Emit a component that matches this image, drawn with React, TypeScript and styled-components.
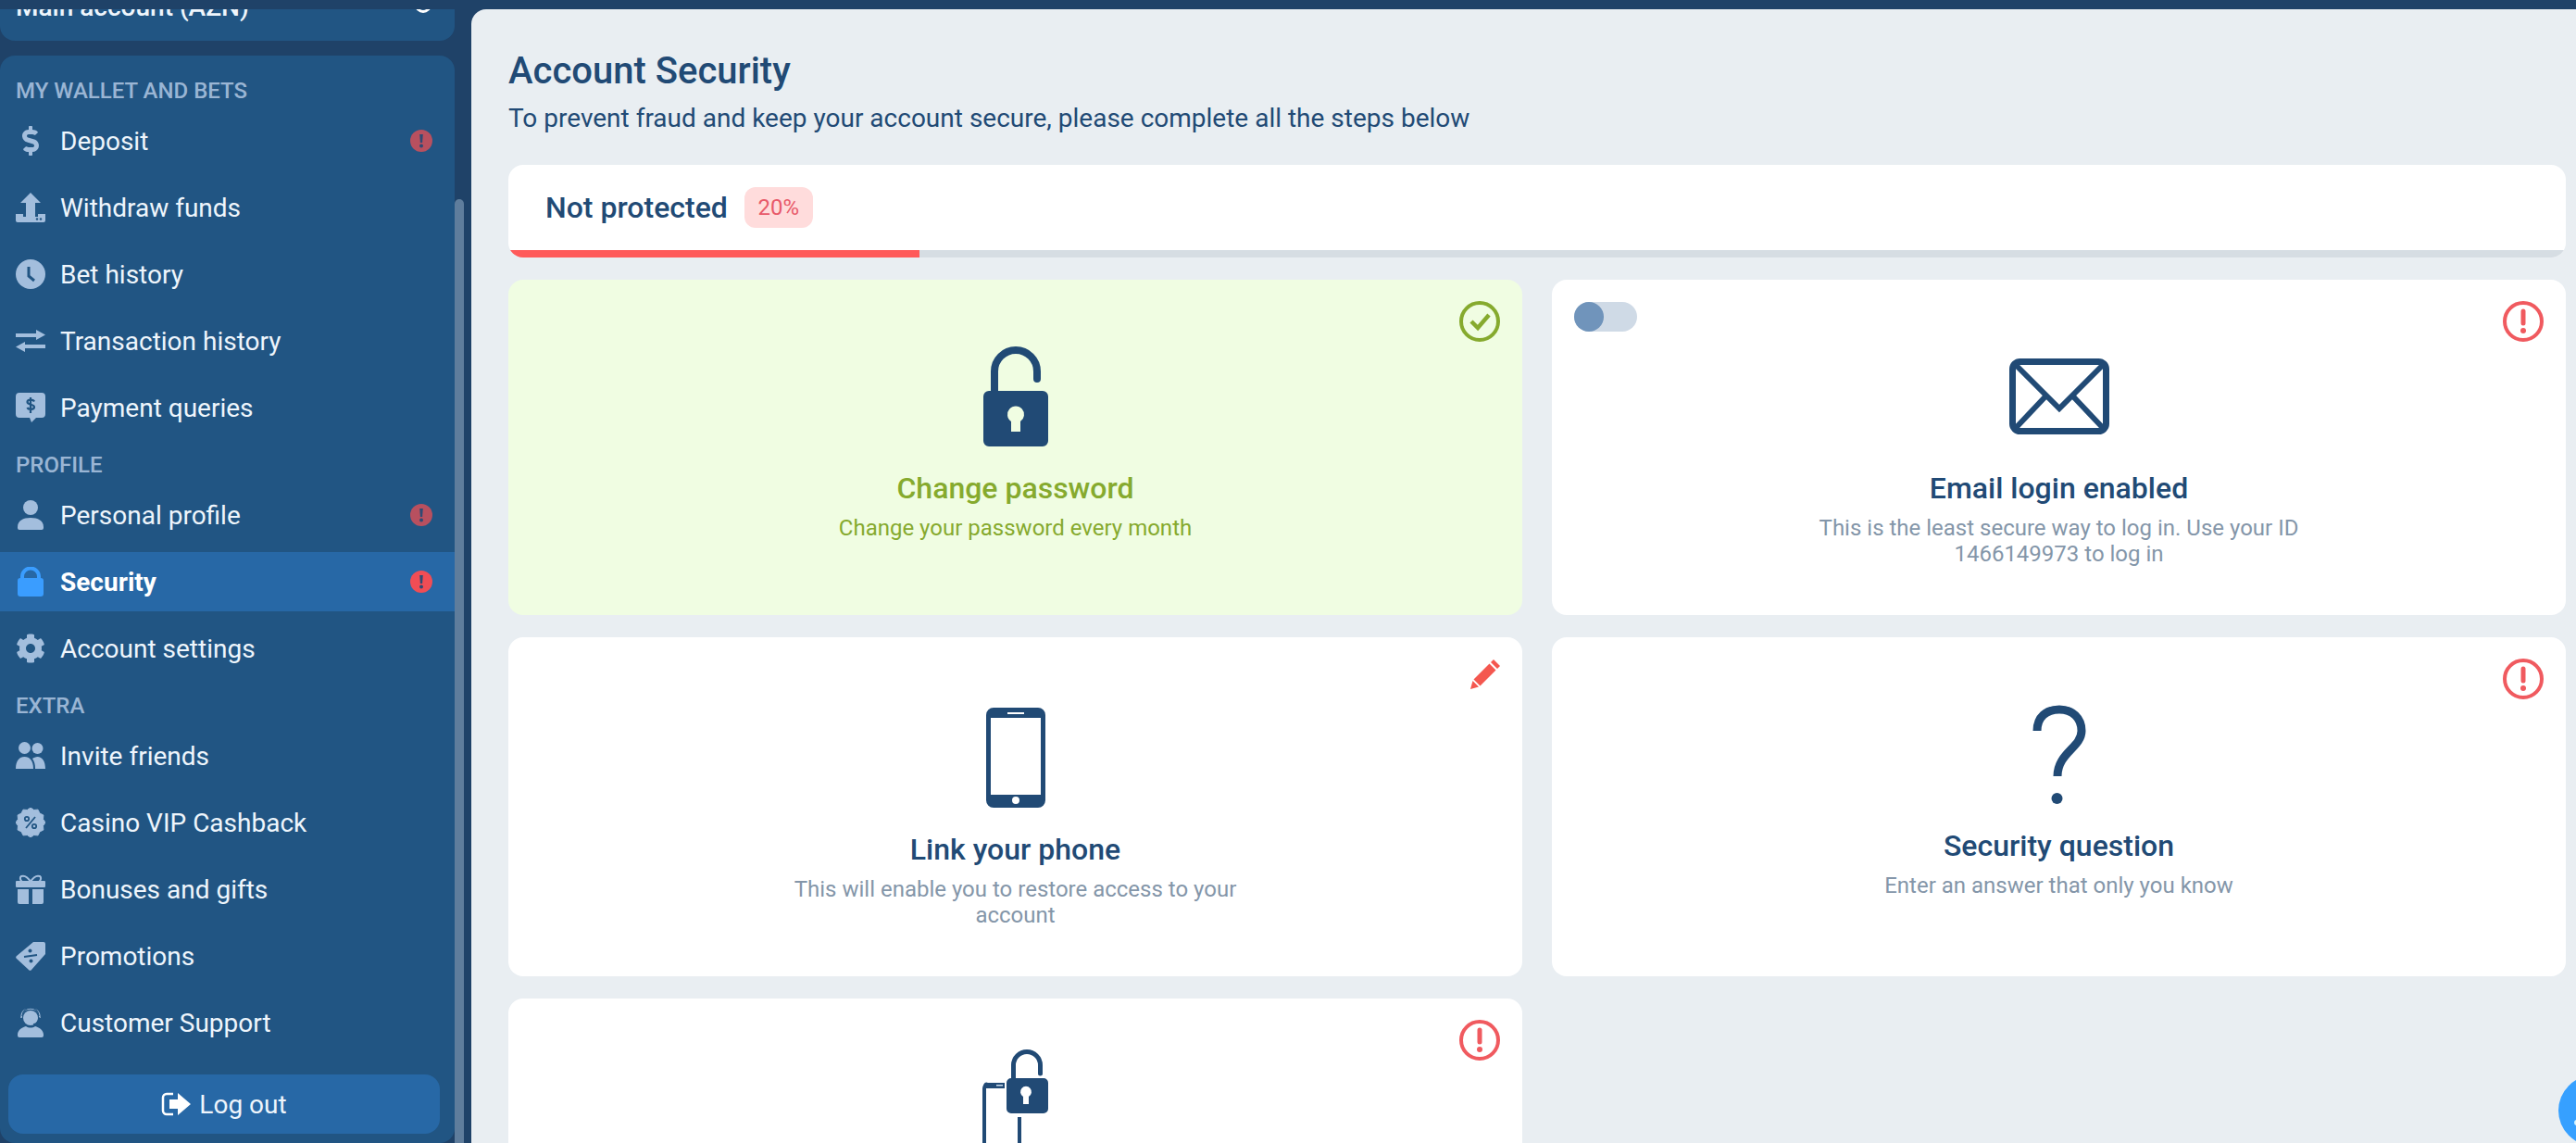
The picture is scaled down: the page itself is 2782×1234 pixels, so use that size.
import * as React from "react";
import styled, { createGlobalStyle } from "styled-components";
import { FaCog, FaDollarSign } from "react-icons/fa";

const colors = {
  topBar: "#1f4268",
  panel: "#215583",
  active: "#2768a6",
  sideIcon: "#a3bedd",
  sideText: "#eef5fc",
  sideLabel: "#9ab5d4",
  page: "#e9eef2",
  navy: "#214a75",
  muted: "#8496a9",
  green: "#86aa2e",
  red: "#f05a5f",
};

const GlobalStyle = createGlobalStyle`
  html, body {
    margin: 0;
    height: 100%;
    overflow: hidden;
    background: ${colors.topBar};
    font-family: Roboto, "Noto Sans", sans-serif;
  }
`;

const Shell = styled.div`
  width: 2782px;
  height: 1234px;
  padding-top: 10px;
  box-sizing: border-box;
  display: flex;
  overflow: hidden;
  background: ${colors.topBar};
  position: relative;
`;

const Sidebar = styled.aside`
  width: 509px;
  flex: none;
  display: flex;
  overflow: hidden;
`;

const SideScroll = styled.div`
  width: 491px;
  flex: none;
  display: flex;
  flex-direction: column;
  gap: 16px;
`;

const Rail = styled.div`
  width: 10px;
  flex: none;
  padding-top: 205px;
  display: flex;
`;

const RailThumb = styled.div`
  flex: 1;
  background: #5f7d9c;
  border-radius: 5px 5px 0 0;
`;

const AccountPanel = styled.div`
  margin-top: -26px;
  height: 60px;
  box-sizing: border-box;
  padding: 0 25px 14px 17px;
  display: flex;
  align-items: center;
  justify-content: space-between;
  background: ${colors.panel};
  border-radius: 16px;
  color: ${colors.sideText};
  font-size: 28px;
  font-weight: 500;
`;

const AccountCaret = styled.span`
  width: 12px;
  height: 12px;
  margin-bottom: 4px;
  border: 3px solid #fff;
  border-radius: 50%;
`;

const MenuPanel = styled.nav`
  flex: 1;
  padding: 16px 0 0;
  display: flex;
  flex-direction: column;
  gap: 8px;
  background: ${colors.panel};
  border-radius: 16px;
`;

const MenuLabel = styled.div`
  height: 28px;
  padding: 8px 0 0 17px;
  line-height: 28px;
  font-size: 24px;
  font-weight: 500;
  color: ${colors.sideLabel};
`;

const MenuRow = styled.a<{ $active?: boolean }>`
  height: 64px;
  flex: none;
  padding: 0 24px 0 17px;
  display: flex;
  align-items: center;
  gap: 16px;
  background: ${(p) => (p.$active ? colors.active : "transparent")};
  color: ${(p) => (p.$active ? "#fff" : colors.sideText)};
  font-size: 28px;
  font-weight: ${(p) => (p.$active ? 700 : 400)};
`;

const MenuIcon = styled.span<{ $active?: boolean }>`
  width: 32px;
  height: 32px;
  flex: none;
  display: flex;
  align-items: center;
  justify-content: center;
  color: ${(p) => (p.$active ? "#3a9dff" : colors.sideIcon)};

  svg {
    display: block;
  }
`;

const AlertDot = styled.span<{ $dim?: boolean }>`
  margin-left: auto;
  width: 24px;
  height: 24px;
  border-radius: 50%;
  background: ${(p) => (p.$dim ? "#b8505f" : "#f04d55")};
  display: flex;
  align-items: center;
  justify-content: center;
`;

const LogoutButton = styled.button`
  margin: 16px 16px 10px 9px;
  height: 64px;
  flex: none;
  border: 0;
  border-radius: 16px;
  background: ${colors.active};
  color: ${colors.sideText};
  font: 400 28px Roboto, sans-serif;
  display: flex;
  align-items: center;
  justify-content: center;
  gap: 9px;
`;

const Main = styled.main`
  flex: 1;
  min-width: 0;
  padding: 42px 11px 0 40px;
  background: ${colors.page};
  border-top-left-radius: 16px;
`;

const Title = styled.h1`
  margin: 0;
  line-height: 50px;
  font-size: 40px;
  font-weight: 500;
  color: ${colors.navy};
`;

const Subtitle = styled.p`
  margin: 6px 0 30px;
  line-height: 40px;
  font-size: 28px;
  color: ${colors.navy};
`;

const ProgressCard = styled.section`
  height: 100px;
  box-sizing: border-box;
  background: #fff;
  border-radius: 16px;
  overflow: hidden;
  display: flex;
  flex-direction: column;
`;

const ProgressHead = styled.div`
  flex: 1;
  padding-left: 40px;
  display: flex;
  align-items: center;
  gap: 18px;
`;

const ProgressName = styled.strong`
  font-size: 32px;
  font-weight: 500;
  color: ${colors.navy};
`;

const ProgressBadge = styled.span`
  width: 74px;
  height: 44px;
  border-radius: 12px;
  background: #ffdcdc;
  color: #e85a6a;
  font-size: 24px;
  display: flex;
  align-items: center;
  justify-content: center;
`;

const ProgressTrack = styled.div`
  height: 8px;
  flex: none;
  background: #d6dde3;
`;

const ProgressFill = styled.div`
  height: 100%;
  background: #ff5a5a;
`;

const Steps = styled.div`
  margin-top: 24px;
  display: grid;
  grid-template-columns: 1fr 1fr;
  grid-template-rows: 362px 366px 362px;
  gap: 24px 32px;
`;

const StepCard = styled.article<{ $done?: boolean; $top: number }>`
  position: relative;
  box-sizing: border-box;
  padding-top: ${(p) => p.$top}px;
  display: flex;
  flex-direction: column;
  align-items: center;
  text-align: center;
  border-radius: 16px;
  background: ${(p) => (p.$done ? "#f0fde2" : "#fff")};
`;

const StepIcon = styled.div`
  height: 108px;
  display: flex;
  align-items: center;
  justify-content: center;
  color: ${colors.navy};

  svg {
    display: block;
  }
`;

const StepTitle = styled.h3<{ $done?: boolean }>`
  margin: 26px 0 0;
  line-height: 38px;
  font-size: 32px;
  font-weight: 500;
  color: ${(p) => (p.$done ? colors.green : colors.navy)};
`;

const StepText = styled.p<{ $done?: boolean }>`
  margin: 10px 0 0;
  max-width: 540px;
  line-height: 28px;
  font-size: 24px;
  color: ${(p) => (p.$done ? colors.green : colors.muted)};
`;

const StatusMark = styled.span`
  position: absolute;
  top: 23px;
  right: 24px;
  width: 44px;
  height: 44px;

  svg {
    display: block;
  }
`;

const Toggle = styled.span`
  position: absolute;
  top: 24px;
  left: 24px;
  width: 68px;
  height: 32px;
  border-radius: 16px;
  background: #cfdae6;

  &::before {
    content: "";
    display: block;
    width: 32px;
    height: 32px;
    border-radius: 50%;
    background: #7094bb;
  }
`;

const ChatBubble = styled.div`
  position: absolute;
  left: 2763px;
  top: 1161px;
  width: 76px;
  height: 76px;
  border-radius: 50%;
  background: #36a0ff;

  &::after {
    content: "";
    position: absolute;
    left: 17px;
    top: 48px;
    width: 6px;
    height: 6px;
    border-radius: 50%;
    background: #d8f4ff;
  }
`;

const DepositIcon = () => <FaDollarSign size={32} />;

const UploadIcon = () => (
  <svg width="32" height="32" viewBox="0 0 32 32" fill="currentColor">
    <path d="M16 0l11 11h-6v15H11V11H5z" />
    <path d="M0 23h8v3h16v-3h8v7a2 2 0 0 1-2 2H2a2 2 0 0 1-2-2z" />
    <circle cx="23" cy="28.5" r="1.2" fill={colors.panel} />
    <circle cx="27" cy="28.5" r="1.2" fill={colors.panel} />
  </svg>
);

const ClockIcon = () => (
  <svg width="32" height="32" viewBox="0 0 32 32" fill="currentColor">
    <circle cx="16" cy="16" r="16" />
    <path d="M14 8v10l6 5" fill="none" stroke={colors.panel} strokeWidth="3" />
  </svg>
);

const TransferIcon = () => (
  <svg width="32" height="32" viewBox="0 0 32 32" fill="currentColor">
    <path d="M0 8h22V4l10 5.500L22 15v-3H0z" />
    <path d="M32 20H10v-3L0 22.500 10 28v-4h22z" />
  </svg>
);

const QueryIcon = () => (
  <svg width="32" height="32" viewBox="0 0 32 32" fill="currentColor">
    <path d="M4 0h24a4 4 0 0 1 4 4v19a4 4 0 0 1-4 4h-6l-5 5-2-5H4a4 4 0 0 1-4-4V4a4 4 0 0 1 4-4z" />
    <path
      d="M20 9.500c-1-2.500-7.500-2.500-7.500.500 0 3.500 7.500 2 7.500 5.500 0 3-6.500 3-7.500.500M16 5v17"
      fill="none"
      stroke={colors.panel}
      strokeWidth="2.200"
    />
  </svg>
);

const UserIcon = () => (
  <svg width="32" height="32" viewBox="0 0 32 32" fill="currentColor">
    <circle cx="16" cy="8" r="8" />
    <path d="M2 29c0-7 6-10 14-10s14 3 14 10v1a2 2 0 0 1-2 2H4a2 2 0 0 1-2-2z" />
  </svg>
);

const PadlockIcon = () => (
  <svg width="32" height="32" viewBox="0 0 32 32" fill="currentColor">
    <path d="M7 14V10.500a9 9 0 0 1 18 0V14" fill="none" stroke="currentColor" strokeWidth="4" />
    <rect x="2" y="12" width="28" height="20" rx="3" />
  </svg>
);

const FriendsIcon = () => (
  <svg width="32" height="32" viewBox="0 0 32 32" fill="currentColor">
    <circle cx="9.500" cy="7.500" r="6.500" />
    <circle cx="23.500" cy="8" r="6" />
    <path d="M0 30c0-9 4-13 9.500-13S19 21 19 30z" />
    <path d="M21 30c0-5-1-8-3-11 1.500-1 3.500-2 5.500-2 5 0 8.500 5 8.500 13z" />
  </svg>
);

const scallopPoints = Array.from({ length: 24 }, (_, i) => {
  const r = i % 2 === 0 ? 16 : 14;
  const a = (i * Math.PI) / 12;
  return `${(16 + r * Math.cos(a)).toFixed(2)},${(16 + r * Math.sin(a)).toFixed(2)}`;
}).join(" ");

const CashbackIcon = () => (
  <svg width="32" height="32" viewBox="0 0 32 32" fill="currentColor">
    <polygon points={scallopPoints} strokeLinejoin="round" stroke="currentColor" />
    <g fill="none" stroke={colors.panel} strokeWidth="1.800">
      <circle cx="12" cy="12" r="2.200" />
      <circle cx="20" cy="20" r="2.200" />
      <path d="M21 10L11 22" />
    </g>
  </svg>
);

const GiftIcon = () => (
  <svg width="32" height="32" viewBox="0 0 32 32" fill="currentColor">
    <path
      d="M16 8C13 3 9 1 6 2c-2 1-1 5 1 6M16 8c3-5 7-7 10-6 2 1 1 5-1 6"
      fill="none"
      stroke="currentColor"
      strokeWidth="2"
    />
    <rect x="0" y="7" width="32" height="7" rx="1" />
    <path d="M2 16h12v16H4a2 2 0 0 1-2-2zM18 16h12v14a2 2 0 0 1-2 2H18z" />
  </svg>
);

const TagIcon = () => (
  <svg width="32" height="32" viewBox="0 0 32 32" fill="currentColor">
    <path d="M19 1h11a2 2 0 0 1 2 2v11L17 31a2 2 0 0 1-3 0L1 19a2 2 0 0 1 0-3z" />
    <path d="M9 17L23 15" stroke={colors.panel} strokeWidth="2" />
    <circle cx="15.500" cy="10.500" r="2" fill={colors.panel} />
    <circle cx="16.500" cy="21.500" r="2" fill={colors.panel} />
  </svg>
);

const SupportIcon = () => (
  <svg width="32" height="32" viewBox="0 0 32 32" fill="currentColor">
    <path d="M6 11C6 4 10 1 16 1s10 3 10 10" fill="none" stroke="currentColor" strokeWidth="1.500" />
    <circle cx="16" cy="11" r="8" />
    <path d="M7 9a9 9 0 0 1 18 0M25 10c0 5-2 7-6 8" fill="none" stroke={colors.panel} strokeWidth="1.300" />
    <path d="M2 29c0-5 5-8 9-9 3 2 7 2 10 0 4 1 9 4 9 9v1a2 2 0 0 1-2 2H4a2 2 0 0 1-2-2z" />
  </svg>
);

const LogoutIcon = () => (
  <svg width="32" height="26" viewBox="0 0 32 26" fill="#fff">
    <path d="M13 2H6a4 4 0 0 0-4 4v14a4 4 0 0 0 4 4h7" fill="none" stroke="#fff" strokeWidth="2.500" />
    <path d="M9 8h9V1l14 12-14 12v-7H9z" />
  </svg>
);

const AlertGlyph = () => (
  <svg width="24" height="24" viewBox="0 0 24 24" fill="#2f4a74">
    <path d="M10.200 5h3.600l-.7 9h-2.200z" />
    <circle cx="12" cy="17.500" r="2" />
  </svg>
);

const CheckMark = () => (
  <svg width="44" height="44" viewBox="0 0 44 44" fill="none" stroke={colors.green}>
    <circle cx="22" cy="22" r="20" strokeWidth="4" />
    <path d="M13 22l7 7 12-14" strokeWidth="4.500" />
  </svg>
);

const WarnMark = () => (
  <svg width="44" height="44" viewBox="0 0 44 44" fill="none">
    <circle cx="22" cy="22" r="20" stroke={colors.red} strokeWidth="4" />
    <path d="M22 11v13" stroke={colors.red} strokeWidth="5" strokeLinecap="round" />
    <circle cx="22" cy="32" r="3" fill={colors.red} />
  </svg>
);

const PencilMark = () => (
  <svg width="44" height="44" viewBox="0 0 44 44" fill="#f4574f">
    <path d="M34 4l3-3 7 7-3 3z" />
    <path d="M32.500 5.500l7 7-17 17-7-7z" />
    <path d="M14.500 24l6.500 6.500-9 2.500z" />
  </svg>
);

const OpenLockIcon = () => (
  <svg width="70" height="108" viewBox="0 0 70 108" fill="currentColor">
    <path d="M12 52V27a23 23 0 0 1 46 0v8" fill="none" stroke="currentColor" strokeWidth="8" strokeLinecap="round" />
    <path
      fillRule="evenodd"
      d="M6 48h58a6 6 0 0 1 6 6v48a6 6 0 0 1-6 6H6a6 6 0 0 1-6-6V54a6 6 0 0 1 6-6zM30 81a9 9 0 1 1 10 0v11H30z"
    />
  </svg>
);

const EnvelopeIcon = () => (
  <svg width="108" height="82" viewBox="0 0 108 82" fill="none" stroke="currentColor">
    <rect x="3.500" y="3.500" width="101" height="75" rx="8" strokeWidth="7" />
    <path d="M6 6l48 48L102 6" strokeWidth="6" />
    <path d="M6 76l34-36M102 76L68 40" strokeWidth="6" />
  </svg>
);

const PhoneIcon = () => (
  <svg width="64" height="108" viewBox="0 0 64 108" fill="currentColor">
    <path
      fillRule="evenodd"
      d="M8 0h48a8 8 0 0 1 8 8v92a8 8 0 0 1-8 8H8a8 8 0 0 1-8-8V8a8 8 0 0 1 8-8zM5 11v83h54V11zM23 5v2h18V5zM32 96a4 4 0 1 0 0 8 4 4 0 0 0 0-8z"
    />
  </svg>
);

const QuestionIcon = () => (
  <svg width="58" height="107" viewBox="0 0 58 107" fill="none" stroke="currentColor">
    <path d="M5 28C5 13 15 5 29 5c14 0 24 9 24 23 0 18-26 24-26 49" strokeWidth="9" />
    <ellipse cx="26.500" cy="101" rx="6" ry="6" fill="currentColor" stroke="none" />
  </svg>
);

const PhoneLockIcon = () => (
  <svg width="71" height="108" viewBox="0 0 71 108" fill="currentColor">
    <path d="M2 108V42a4 4 0 0 1 4-4h18" fill="none" stroke="currentColor" strokeWidth="4" />
    <path d="M6 36h18v6H3a3 3 0 0 1 3-6z" />
    <rect x="15" y="38" width="7" height="1.500" fill="#cfe0f0" />
    <path d="M40 73v35" fill="none" stroke="currentColor" strokeWidth="4" />
    <path d="M33.500 33V17a14.500 14.500 0 0 1 29 0v9" fill="none" stroke="currentColor" strokeWidth="5" strokeLinecap="round" />
    <path
      fillRule="evenodd"
      d="M31 31h35a5 5 0 0 1 5 5v28a5 5 0 0 1-5 5H31a5 5 0 0 1-5-5V36a5 5 0 0 1 5-5zM44 51a6 6 0 1 1 6 0v8h-6z"
    />
  </svg>
);

type MenuEntry =
  | { label: string }
  | { name: string; icon: React.ReactNode; alert?: "dim" | "bright"; active?: boolean };

const menu: MenuEntry[] = [
  { label: "MY WALLET AND BETS" },
  { name: "Deposit", icon: <DepositIcon />, alert: "dim" },
  { name: "Withdraw funds", icon: <UploadIcon /> },
  { name: "Bet history", icon: <ClockIcon /> },
  { name: "Transaction history", icon: <TransferIcon /> },
  { name: "Payment queries", icon: <QueryIcon /> },
  { label: "PROFILE" },
  { name: "Personal profile", icon: <UserIcon />, alert: "dim" },
  { name: "Security", icon: <PadlockIcon />, alert: "bright", active: true },
  { name: "Account settings", icon: <FaCog size={32} /> },
  { label: "EXTRA" },
  { name: "Invite friends", icon: <FriendsIcon /> },
  { name: "Casino VIP Cashback", icon: <CashbackIcon /> },
  { name: "Bonuses and gifts", icon: <GiftIcon /> },
  { name: "Promotions", icon: <TagIcon /> },
  { name: "Customer Support", icon: <SupportIcon /> },
];

const App = () => (
  <Shell>
    <GlobalStyle />
    <Sidebar>
      <SideScroll>
        <AccountPanel>
          <span>Main account (AZN)</span>
          <AccountCaret />
        </AccountPanel>
        <MenuPanel>
          {menu.map((entry) =>
            "label" in entry ? (
              <MenuLabel key={entry.label}>{entry.label}</MenuLabel>
            ) : (
              <MenuRow key={entry.name} $active={entry.active}>
                <MenuIcon $active={entry.active}>{entry.icon}</MenuIcon>
                {entry.name}
                {entry.alert ? (
                  <AlertDot $dim={entry.alert === "dim"}>
                    <AlertGlyph />
                  </AlertDot>
                ) : null}
              </MenuRow>
            )
          )}
          <LogoutButton>
            <LogoutIcon />
            Log out
          </LogoutButton>
        </MenuPanel>
      </SideScroll>
      <Rail>
        <RailThumb />
      </Rail>
    </Sidebar>
    <Main>
      <Title>Account Security</Title>
      <Subtitle>To prevent fraud and keep your account secure, please complete all the steps below</Subtitle>
      <ProgressCard>
        <ProgressHead>
          <ProgressName>Not protected</ProgressName>
          <ProgressBadge>20%</ProgressBadge>
        </ProgressHead>
        <ProgressTrack>
          <ProgressFill style={{ width: "20%" }} />
        </ProgressTrack>
      </ProgressCard>
      <Steps>
        <StepCard $done $top={72}>
          <StatusMark>
            <CheckMark />
          </StatusMark>
          <StepIcon>
            <OpenLockIcon />
          </StepIcon>
          <StepTitle $done>Change password</StepTitle>
          <StepText $done>Change your password every month</StepText>
        </StepCard>
        <StepCard $top={72}>
          <Toggle />
          <StatusMark>
            <WarnMark />
          </StatusMark>
          <StepIcon>
            <EnvelopeIcon />
          </StepIcon>
          <StepTitle>Email login enabled</StepTitle>
          <StepText>This is the least secure way to log in. Use your ID 1466149973 to log in</StepText>
        </StepCard>
        <StepCard $top={76}>
          <StatusMark>
            <PencilMark />
          </StatusMark>
          <StepIcon>
            <PhoneIcon />
          </StepIcon>
          <StepTitle>Link your phone</StepTitle>
          <StepText>This will enable you to restore access to your account</StepText>
        </StepCard>
        <StepCard $top={72}>
          <StatusMark>
            <WarnMark />
          </StatusMark>
          <StepIcon>
            <QuestionIcon />
          </StepIcon>
          <StepTitle>Security question</StepTitle>
          <StepText>Enter an answer that only you know</StepText>
        </StepCard>
        <StepCard $top={55}>
          <StatusMark>
            <WarnMark />
          </StatusMark>
          <StepIcon>
            <PhoneLockIcon />
          </StepIcon>
        </StepCard>
      </Steps>
    </Main>
    <ChatBubble />
  </Shell>
);

export default App;
